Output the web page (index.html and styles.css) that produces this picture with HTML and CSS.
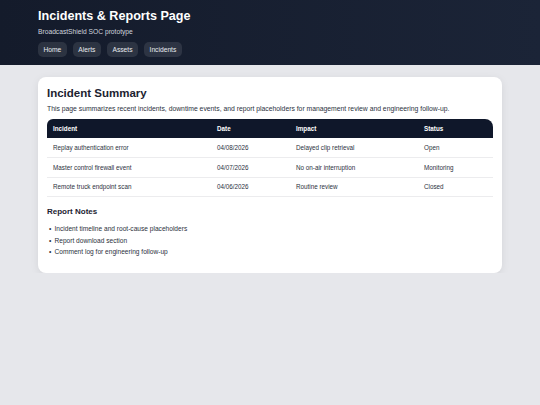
FILE: index.html
```html
<!DOCTYPE html>
<html lang="en">
<head>
  <meta charset="UTF-8" />
  <meta name="viewport" content="width=device-width, initial-scale=1.0"/>
  <title>Incidents &amp; Reports Page</title>
  <link rel="stylesheet" href="styles.css">
</head>
<body>
  <!-- Header -->
  <header class="topbar">
    <div class="wrap">
      <h1 class="page-title">Incidents &amp; Reports Page</h1>
      <div class="subtitle">BroadcastShield SOC prototype</div>
      <nav class="nav">
        <a href="#" class="pill">Home</a>
        <a href="#" class="pill">Alerts</a>
        <a href="#" class="pill">Assets</a>
        <a href="#" class="pill">Incidents</a>
      </nav>
    </div>
  </header>

  <main class="wrap content">
    <section class="card">
      <h2 class="card-title">Incident Summary</h2>
      <p class="intro">This page summarizes recent incidents, downtime events, and report placeholders for management review and engineering follow-up.</p>

      <table class="incidents">
        <thead>
          <tr>
            <th class="c-inc">Incident</th>
            <th class="c-date">Date</th>
            <th class="c-imp">Impact</th>
            <th class="c-stat">Status</th>
          </tr>
        </thead>
        <tbody>
          <tr><td>Replay authentication error</td><td>04/08/2026</td><td>Delayed clip retrieval</td><td>Open</td></tr>
          <tr><td>Master control firewall event</td><td>04/07/2026</td><td>No on-air interruption</td><td>Monitoring</td></tr>
          <tr><td>Remote truck endpoint scan</td><td>04/06/2026</td><td>Routine review</td><td>Closed</td></tr>
        </tbody>
      </table>

      <h3 class="notes-title">Report Notes</h3>
      <ul class="notes">
        <li>Incident timeline and root-cause placeholders</li>
        <li>Report download section</li>
        <li>Comment log for engineering follow-up</li>
      </ul>
    </section>
  </main>
</body>
</html>
```

FILE: styles.css
```css
*{margin:0;padding:0;box-sizing:border-box;}
html,body{background:#e6e7eb;font-family:"Liberation Sans",Arial,sans-serif;color:#1f2430;}

.wrap{width:464px;margin:0 auto;}

/* header */
.topbar{background:linear-gradient(90deg,#141b2b 0%,#1b2437 100%);
  color:white;padding:8px 0 9px;height:65px;}
.page-title{font-size:12.6px;font-weight:bold;line-height:16px;}
.subtitle{font-size:6.7px;color:#cfd5df;margin-top:3px;line-height:9px;}
.nav{display:flex;gap:6px;margin-top:6px;}
.pill{display:inline-block;padding:0 5.5px;height:15px;line-height:15px;
  font-size:6.7px;color:#e8ebf0;text-decoration:none;
  background:rgba(255,255,255,0.1);border-radius:5px;}

/* card */
.content{padding-top:12px;}
.card{background:white;border-radius:8px;padding:9px 9px 10px;height:196px;
  box-shadow:0 2px 8px rgba(0,0,0,0.08);}
.card-title{font-size:11.5px;font-weight:bold;line-height:14px;color:#1c2230;}
.intro{font-size:6.8px;color:#2b3140;margin-top:4px;line-height:9px;}

.incidents{width:446px;border-collapse:separate;border-spacing:0;margin-top:6px;font-size:6.3px;}
.incidents th{background:#0f172a;color:white;text-align:left;font-weight:bold;
  height:19px;padding:0 6px;}
.incidents th.c-inc{border-top-left-radius:6px;width:164px;}
.incidents th.c-date{width:79px;}
.incidents th.c-imp{width:128px;}
.incidents th.c-stat{border-top-right-radius:8px;width:75px;}
.incidents td{height:19.8px;padding:0 6px;color:#2b3140;border-bottom:1px solid #ececee;}

.notes-title{font-size:8px;font-weight:bold;color:#1c2230;margin-top:10px;line-height:10px;}
.notes{list-style:none;font-size:6.6px;color:#2b3140;margin-top:6px;padding-left:8px;line-height:11.5px;}
.notes li::before{content:"\2022";display:inline-block;width:5.5px;margin-left:-6px;}
```
